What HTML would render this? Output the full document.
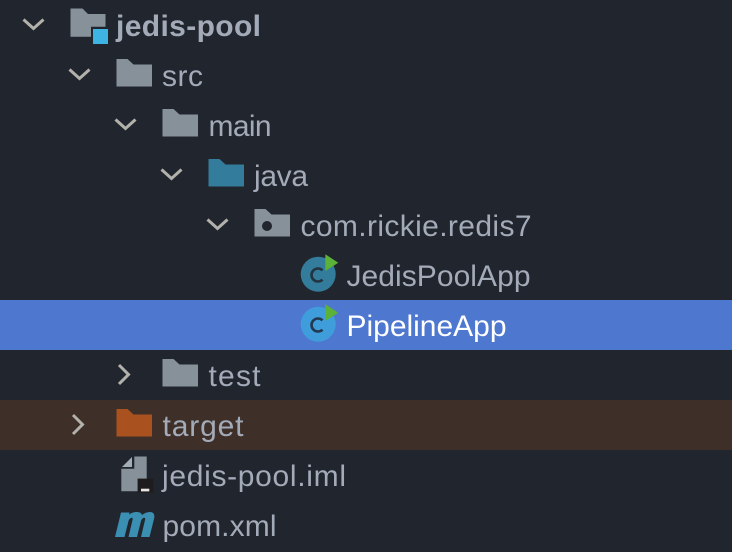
<!DOCTYPE html>
<html>
<head>
<meta charset="utf-8">
<style>
html,body{margin:0;padding:0;width:732px;height:552px;overflow:hidden;background:#21252d}
svg{display:block}
text{font-family:"Liberation Sans",sans-serif;font-size:30px;fill:#a3abb9}
</style>
</head>
<body>
<svg width="732" height="552" viewBox="0 0 732 552" xmlns="http://www.w3.org/2000/svg">
<defs>
<path id="f" d="M0 0H11L17 5.500H35.500V27.500H0Z"/>
</defs>
<rect width="732" height="552" fill="#21252d"/>
<rect y="300" width="732" height="50" fill="#4e78d0"/>
<rect y="400" width="732" height="50" fill="#3e3028"/>

<g fill="none" stroke="#b2b1ab" stroke-width="3">
<path d="M23.500 19.500L33.500 28.500L43.500 19.500"/>
<path d="M69.500 69.500L79.500 78.500L89.500 69.500"/>
<path d="M115.500 119.500L125.500 128.500L135.500 119.500"/>
<path d="M161.500 169.500L171.500 178.500L181.500 169.500"/>
<path d="M207.500 219.500L217.500 228.500L227.500 219.500"/>
<path d="M119 365L128.500 374.500L119 384"/>
<path d="M73 415L82.500 424.500L73 434"/>
</g>

<!-- project folder -->
<path d="M70.500 8.500H82.500L88 14H105.500V26.700H91V36.700H70.500Z" fill="#87919a"/>
<rect x="93" y="29" width="15" height="15" fill="#3eb4e3"/>

<use href="#f" x="116.500" y="59" fill="#87919a"/>
<use href="#f" x="162.500" y="109" fill="#87919a"/>
<use href="#f" x="208.500" y="159" fill="#337c9b"/>
<use href="#f" x="254.500" y="209" fill="#87919a"/>
<circle cx="267" cy="226" r="5" fill="#21252d"/>
<use href="#f" x="162.500" y="359" fill="#87919a"/>
<use href="#f" x="116.500" y="409" fill="#a9521f"/>

<!-- class icons -->
<circle cx="318.200" cy="274.200" r="17.500" fill="#337c9b"/>
<path d="M322.500 270.300A6.500 6.500 0 1 0 322.500 279.700" fill="none" stroke="#23333f" stroke-width="2.600"/>
<path d="M325.300 254.300L338.300 262.700L325.300 271Z" fill="#5cb138"/>

<circle cx="318.200" cy="324.200" r="17.500" fill="#3f9ddb"/>
<path d="M322.500 320.300A6.500 6.500 0 1 0 322.500 329.700" fill="none" stroke="#22394f" stroke-width="2.600"/>
<path d="M325.300 304.300L338.300 312.700L325.300 321Z" fill="#5cb138"/>

<!-- iml file -->
<path d="M134.300 456.500H146.700V478.700H137.700V491.300H121.300V468.700H134.300Z" fill="#87919a"/>
<path d="M122 467L132 457V467Z" fill="#a3adb5"/>
<rect x="137.700" y="478.700" width="15.600" height="14" fill="#1f1c1e"/>
<rect x="141" y="488.700" width="8.300" height="2.700" fill="#e8e6e4"/>

<!-- maven m -->
<path d="M115 537L121 512.500H129.500L129 514.500C131 513 133.500 512 136.500 512C139.500 512 141.500 513 142 515C144.500 513 147 512 150 512C154 512 155 515 154 519L149.500 537H141L145 520C145.500 518.200 144.800 517.500 143.800 517.800C142.500 518.200 141.500 519.500 141 521L137 537H128.500L132.500 520C133 518.200 132.300 517.500 131.300 517.800C130 518.200 129 519.500 128.500 521L124.500 537Z" fill="#3a8fb2"/>

<text x="116" y="36" textLength="145" style="font-weight:bold">jedis-pool</text>
<text x="162" y="86" textLength="41">src</text>
<text x="208.500" y="136" textLength="63">main</text>
<text x="254" y="186" textLength="54">java</text>
<text x="300.500" y="236" textLength="231">com.rickie.redis7</text>
<text x="346.500" y="286" textLength="184">JedisPoolApp</text>
<text x="346.500" y="336" textLength="160" style="fill:#fff">PipelineApp</text>
<text x="208.500" y="386" textLength="52">test</text>
<text x="162.500" y="436" textLength="81">target</text>
<text x="162" y="486" textLength="184">jedis-pool.iml</text>
<text x="162.500" y="536" textLength="114">pom.xml</text>
</svg>
</body>
</html>
